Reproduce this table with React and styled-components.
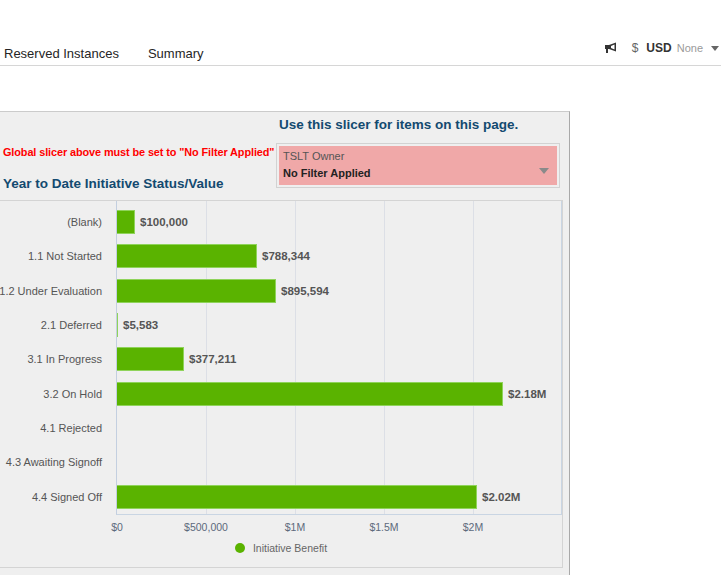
import React from "react";
import styled, { createGlobalStyle } from "styled-components";

const GlobalStyle = createGlobalStyle`
  html, body {
    margin: 0;
    padding: 0;
    background: #ffffff;
    font-family: "Liberation Sans", Arial, sans-serif;
  }
`;

const data = [
  { label: "(Blank)", value: 100000, text: "$100,000" },
  { label: "1.1 Not Started", value: 788344, text: "$788,344" },
  { label: "1.2 Under Evaluation", value: 895594, text: "$895,594" },
  { label: "2.1 Deferred", value: 5583, text: "$5,583" },
  { label: "3.1 In Progress", value: 377211, text: "$377,211" },
  { label: "3.2 On Hold", value: 2170000, text: "$2.18M" },
  { label: "4.1 Rejected", value: 0, text: "" },
  { label: "4.3 Awaiting Signoff", value: 0, text: "" },
  { label: "4.4 Signed Off", value: 2020000, text: "$2.02M" },
];

const ticks = [
  { value: 0, text: "$0" },
  { value: 500000, text: "$500,000" },
  { value: 1000000, text: "$1M" },
  { value: 1500000, text: "$1.5M" },
  { value: 2000000, text: "$2M" },
];

const PX_PER_UNIT = 89 / 500000;

const TopBar = styled.div`
  height: 66px;
  border-bottom: 1px solid #d6d6d6;
  display: flex;
  align-items: flex-end;
  justify-content: space-between;
  box-sizing: border-box;
`;

const Tabs = styled.div`
  display: flex;
  gap: 29px;
  padding-left: 4px;
  padding-bottom: 2px;
`;

const Tab = styled.div`
  font-size: 13px;
  color: #252525;
  line-height: 18px;
`;

const Currency = styled.div`
  display: flex;
  align-items: center;
  padding-right: 2px;
  padding-bottom: 9px;
  line-height: 16px;
`;

const IconWrap = styled.span`
  display: inline-flex;
  margin-right: 14px;
`;

const Dollar = styled.span`
  font-size: 12px;
  color: #666;
  margin-right: 8px;
`;

const Code = styled.span`
  font-size: 12px;
  font-weight: bold;
  color: #333;
  margin-right: 5px;
`;

const None = styled.span`
  font-size: 11px;
  color: #9a9a9a;
  margin-right: 8px;
`;

const Caret = styled.span`
  width: 0;
  height: 0;
  border-left: 4px solid transparent;
  border-right: 4px solid transparent;
  border-top: 5px solid #666;
`;

const Panel = styled.div`
  margin-top: 45px;
  width: 570px;
  box-sizing: border-box;
  background: #efefef;
  border-top: 1px solid #cbcbcb;
  border-right: 1px solid #a9a9a9;
  padding-bottom: 20px;
`;

const Header = styled.div`
  display: grid;
  grid-template-columns: 276px 284px;
  height: 76px;
`;

const LeftHead = styled.div`
  padding: 33px 0 0 3px;
  display: flex;
  flex-direction: column;
`;

const Warning = styled.div`
  color: #ff0000;
  font-size: 10.9px;
  font-weight: bold;
  line-height: 14px;
  white-space: nowrap;
  letter-spacing: -0.1px;
`;

const Title = styled.div`
  color: #134a70;
  font-size: 13.5px;
  font-weight: bold;
  line-height: 16px;
  margin-top: ${(p) => p.$gap || 0}px;
  padding-left: ${(p) => p.$indent || 0}px;
  white-space: nowrap;
`;

const RightHead = styled.div`
  padding-top: 5px;
`;

const SlicerFrame = styled.div`
  margin-top: 10px;
  height: 45px;
  box-sizing: border-box;
  border: 1px solid #d2d2d2;
  padding: 2px;
`;

const Slicer = styled.div`
  height: 100%;
  background: #f0a8a8;
  position: relative;
  padding: 3px 0 0 4px;
  box-sizing: border-box;
`;

const SlicerLabel = styled.div`
  font-size: 11px;
  color: #555;
  line-height: 14px;
`;

const SlicerValue = styled.div`
  font-size: 11px;
  font-weight: bold;
  color: #222;
  line-height: 16px;
  margin-top: 2px;
`;

const SlicerCaret = styled.span`
  position: absolute;
  right: 8px;
  top: 22px;
  width: 0;
  height: 0;
  border-left: 5px solid transparent;
  border-right: 5px solid transparent;
  border-top: 6px solid #8a8a8a;
`;

const ChartBox = styled.div`
  margin-top: 12px;
  margin-left: -1px;
  width: 564px;
  height: 368px;
  box-sizing: border-box;
  border: 1px solid #d4d4d4;
  display: flex;
  flex-direction: column;
`;

const PlotRow = styled.div`
  display: flex;
  height: 314px;
`;

const Categories = styled.div`
  width: 116px;
  box-sizing: border-box;
  display: flex;
  flex-direction: column;
  padding: 4px 0 1px;
`;

const Category = styled.div`
  flex: 1;
  display: flex;
  align-items: center;
  justify-content: flex-end;
  padding-right: 14px;
  font-size: 11px;
  color: #555;
  white-space: nowrap;
`;

const Plot = styled.div`
  position: relative;
  width: 446px;
  box-sizing: border-box;
  border-left: 1px solid #c3cfe0;
  border-right: 1px solid #c9d5e3;
  border-bottom: 1px solid #c9d5e3;
  display: flex;
  flex-direction: column;
  padding-top: 4px;
`;

const GridLine = styled.div`
  position: absolute;
  top: 0;
  bottom: 0;
  width: 1px;
  background: #dcdfe6;
`;

const BarRow = styled.div`
  flex: 1;
  display: flex;
  align-items: center;
  position: relative;
`;

const Bar = styled.div`
  height: 24px;
  box-sizing: border-box;
  background: #5ab300;
  border: 1px solid #8fd35a;
  border-left: none;
  flex-shrink: 0;
`;

const Value = styled.span`
  margin-left: 5px;
  font-size: 11.5px;
  font-weight: bold;
  color: #555;
  white-space: nowrap;
`;

const AxisRow = styled.div`
  position: relative;
  height: 24px;
  margin-left: 116px;
`;

const Tick = styled.span`
  position: absolute;
  top: 6px;
  transform: translateX(-50%);
  font-size: 10.5px;
  color: #5d6a7c;
  white-space: nowrap;
`;

const Legend = styled.div`
  display: flex;
  align-items: center;
  justify-content: center;
  gap: 8px;
  margin-top: 3px;
  font-size: 10.5px;
  color: #666;
`;

const Dot = styled.span`
  width: 10px;
  height: 10px;
  border-radius: 50%;
  background: #5ab300;
`;

function Megaphone() {
  return (
    <svg width="14" height="12" viewBox="0 0 14 12">
      <rect x="1" y="3" width="4" height="4" fill="#333" />
      <rect x="2" y="7" width="2" height="4" fill="#333" />
      <path d="M5 3 L12 0.5 L12 9.5 L5 7 Z" fill="#333" />
      <path d="M7 4 L10.5 2.5 L10.5 7.5 L7 6 Z" fill="#fff" />
    </svg>
  );
}

export default function App() {
  return (
    <>
      <GlobalStyle />
      <TopBar>
        <Tabs>
          <Tab>Reserved Instances</Tab>
          <Tab>Summary</Tab>
        </Tabs>
        <Currency>
          <IconWrap>
            <Megaphone />
          </IconWrap>
          <Dollar>$</Dollar>
          <Code>USD</Code>
          <None>None</None>
          <Caret />
        </Currency>
      </TopBar>
      <Panel>
        <Header>
          <LeftHead>
            <Warning>Global slicer above must be set to "No Filter Applied"</Warning>
            <Title $gap={17}>Year to Date Initiative Status/Value</Title>
          </LeftHead>
          <RightHead>
            <Title $indent={3}>Use this slicer for items on this page.</Title>
            <SlicerFrame>
              <Slicer>
                <SlicerLabel>TSLT Owner</SlicerLabel>
                <SlicerValue>No Filter Applied</SlicerValue>
                <SlicerCaret />
              </Slicer>
            </SlicerFrame>
          </RightHead>
        </Header>
        <ChartBox>
          <PlotRow>
            <Categories>
              {data.map((d) => (
                <Category key={d.label}>{d.label}</Category>
              ))}
            </Categories>
            <Plot>
              {ticks.slice(1).map((t) => (
                <GridLine key={t.text} style={{ left: t.value * PX_PER_UNIT }} />
              ))}
              {data.map((d) => (
                <BarRow key={d.label}>
                  {d.value > 0 && (
                    <Bar style={{ width: Math.max(1, Math.round(d.value * PX_PER_UNIT)) }} />
                  )}
                  {d.text && <Value>{d.text}</Value>}
                </BarRow>
              ))}
            </Plot>
          </PlotRow>
          <AxisRow>
            {ticks.map((t) => (
              <Tick key={t.text} style={{ left: 1 + t.value * PX_PER_UNIT }}>
                {t.text}
              </Tick>
            ))}
          </AxisRow>
          <Legend>
            <Dot />
            Initiative Benefit
          </Legend>
        </ChartBox>
      </Panel>
    </>
  );
}
